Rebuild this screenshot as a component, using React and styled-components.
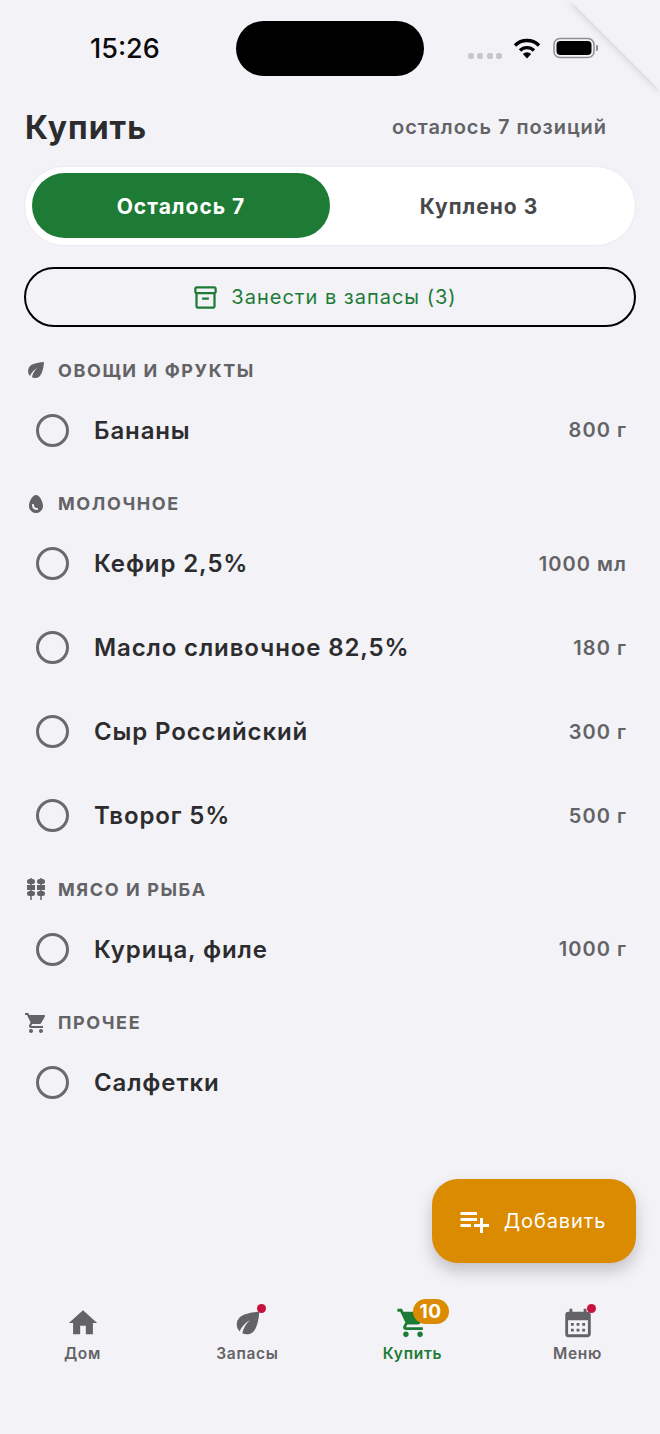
import React from "react";
import styled, { createGlobalStyle } from "styled-components";
import { MdHome, MdEco, MdEgg, MdKebabDining, MdShoppingCart, MdPlaylistAdd, MdOutlineInventory2, MdCalendarMonth } from "react-icons/md";

const Global = createGlobalStyle`
  html, body { margin: 0; padding: 0; background: #f2f2f7; }
  * { box-sizing: border-box; }
`;

const Page = styled.div`
  position: relative;
  width: 660px;
  height: 1434px;
  overflow: hidden;
  display: flex;
  flex-direction: column;
  background: #f2f2f7;
  font-family: Inter, "Noto Sans", sans-serif;
  color: #2c2c2e;
`;

const Fold = styled.svg`
  position: absolute;
  top: 0;
  right: 0;
  width: 100px;
  height: 100px;
`;

const StatusBar = styled.div`
  height: 96px;
  flex: none;
  display: flex;
  align-items: flex-start;
  padding-top: 21px;
`;

const Clock = styled.div`
  width: 236px;
  padding-left: 90px;
  height: 55px;
  line-height: 55px;
  font-size: 27px;
  font-weight: 500;
  color: #0b0b0c;
`;

const Island = styled.div`
  width: 188px;
  height: 55px;
  border-radius: 28px;
  background: #000;
`;

const StatusIcons = styled.div`
  margin-left: 44px;
  height: 55px;
  display: flex;
  align-items: flex-start;
`;

const Dots = styled.div`
  display: flex;
  gap: 3.3px;
  margin-top: 32px;
  margin-right: 11px;
`;

const Dot = styled.span`
  width: 6px;
  height: 6px;
  border-radius: 2px;
  background: #c7c7cc;
`;

const Wifi = styled.svg`
  width: 28px;
  height: 22px;
  margin-top: 16px;
  margin-right: 12px;
`;

const Battery = styled.svg`
  width: 46px;
  height: 22px;
  margin-top: 16px;
`;

const Main = styled.main`
  flex: 1;
  padding: 0 24px;
`;

const Head = styled.header`
  height: 60px;
  display: flex;
  align-items: center;
  justify-content: space-between;
  padding: 2px 29px 0 1px;
`;

const Title = styled.h1`
  margin: 0;
  font-size: 32px;
  font-weight: 700;
  letter-spacing: 1px;
  color: #2c2c2e;
`;

const Remaining = styled.span`
  font-size: 20px;
  font-weight: 600;
  letter-spacing: 0.95px;
  color: #636366;
`;

const Segment = styled.div`
  margin-top: 10px;
  height: 80px;
  display: grid;
  grid-template-columns: 298px 1fr;
  padding: 6px 7px 7px;
  background: #fff;
  border: 1px solid #ebebef;
  border-radius: 40px;
`;

const SegmentItem = styled.div`
  display: flex;
  align-items: center;
  justify-content: center;
  padding-top: 2px;
  border-radius: 33px;
  font-size: 21px;
  font-weight: 700;
  letter-spacing: 1px;
  background: ${(p) => (p.$active ? "#1e7b35" : "transparent")};
  color: ${(p) => (p.$active ? "#fff" : "#48484a")};
`;

const StockButton = styled.div`
  margin-top: 21px;
  height: 60px;
  border: 2px solid #000;
  border-radius: 30px;
  display: flex;
  align-items: center;
  justify-content: center;
  gap: 12px;
  padding-right: 11px;
  color: #1e7b35;
  font-size: 20px;
  font-weight: 400;
  letter-spacing: 1px;
  svg { font-size: 27px; }
`;

const Section = styled.section`
  margin-top: ${(p) => (p.$first ? "32.3px" : "20px")};
`;

const SectionHead = styled.div`
  height: 21.5px;
  display: flex;
  align-items: center;
  gap: 9px;
  color: #636366;
  font-size: 18px;
  font-weight: 700;
  letter-spacing: 1.6px;
  svg { width: 26px; font-size: 24px; flex: none; margin-left: -1px; }
`;

const List = styled.div`
  margin-top: 7.4px;
`;

const Row = styled.div`
  height: 84.6px;
  display: flex;
  align-items: center;
  padding: 0 9px 0 12px;
  & + & { margin-top: -0.6px; }
`;

const Radio = styled.span`
  width: 33px;
  height: 33px;
  flex: none;
  border-radius: 50%;
  border: 3px solid #69696e;
  margin-right: 25px;
`;

const Name = styled.span`
  flex: 1;
  font-size: 24px;
  font-weight: 600;
  letter-spacing: 0.88px;
  color: #2c2c2e;
`;

const Qty = styled.span`
  font-size: 20px;
  font-weight: 600;
  letter-spacing: 1.05px;
  color: #636366;
`;

const Fab = styled.div`
  position: absolute;
  left: 432px;
  top: 1179px;
  width: 204px;
  height: 83.5px;
  border-radius: 26px;
  background: #db8b00;
  color: #fff;
  display: flex;
  align-items: center;
  justify-content: center;
  gap: 12px;
  font-size: 20px;
  letter-spacing: 0.9px;
  box-shadow: 0 8px 16px rgba(0, 0, 0, 0.2);
  svg { font-size: 36px; margin-left: -6px; }
`;

const Nav = styled.nav`
  flex: none;
  height: 150px;
  padding-top: 22px;
  display: grid;
  grid-template-columns: repeat(4, 165px);
`;

const NavItem = styled.div`
  display: flex;
  flex-direction: column;
  align-items: center;
  color: ${(p) => (p.$active ? "#1e7b35" : "#636366")};
  font-size: 15.5px;
  font-weight: 600;
  letter-spacing: 0.7px;
`;

const NavIcon = styled.div`
  position: relative;
  width: 34px;
  height: 34px;
  margin-bottom: 4px;
  display: flex;
  align-items: center;
  justify-content: center;
  svg { font-size: 34px; }
`;

const Pip = styled.span`
  position: absolute;
  top: -2px;
  right: -1px;
  width: 9px;
  height: 9px;
  border-radius: 50%;
  background: #c8103c;
`;

const Badge = styled.span`
  position: absolute;
  top: -7px;
  left: 17px;
  min-width: 36px;
  height: 25px;
  border-radius: 13px;
  background: #db8b00;
  color: #fff;
  font-size: 19px;
  font-weight: 700;
  letter-spacing: 0.5px;
  display: flex;
  align-items: center;
  justify-content: center;
`;

const sections = [
  { icon: <MdEco />, title: "ОВОЩИ И ФРУКТЫ", items: [["Бананы", "800 г"]] },
  { icon: <MdEgg />, title: "МОЛОЧНОЕ", items: [["Кефир 2,5%", "1000 мл"], ["Масло сливочное 82,5%", "180 г"], ["Сыр Российский", "300 г"], ["Творог 5%", "500 г"]] },
  { icon: <MdKebabDining />, title: "МЯСО И РЫБА", items: [["Курица, филе", "1000 г"]] },
  { icon: <MdShoppingCart />, title: "ПРОЧЕЕ", items: [["Салфетки", ""]] },
];

export default function App() {
  return (
    <Page>
      <Global />
      <StatusBar>
        <Clock>15:26</Clock>
        <Island />
        <StatusIcons>
          <Dots><Dot /><Dot /><Dot /><Dot /></Dots>
          <Wifi viewBox="0 0 28 22">
            <path d="M2 8.500A17 17 0 0 1 26 8.500" fill="none" stroke="#000" strokeWidth="3.400" />
            <path d="M7 13.500A10 10 0 0 1 21 13.500" fill="none" stroke="#000" strokeWidth="3.400" />
            <path d="M14 21.500L9.800 17A6 6 0 0 1 18.200 17Z" fill="#000" />
          </Wifi>
          <Battery viewBox="0 0 46 22">
            <rect x="1" y="1.500" width="40" height="19" rx="6" fill="none" stroke="#8e8e93" strokeWidth="1.500" />
            <rect x="3.500" y="4" width="35" height="14" rx="4" fill="#000" />
            <rect x="43" y="8" width="2" height="6" rx="1" fill="#8e8e93" />
          </Battery>
        </StatusIcons>
      </StatusBar>
      <Main>
        <Head>
          <Title>Купить</Title>
          <Remaining>осталось 7 позиций</Remaining>
        </Head>
        <Segment>
          <SegmentItem $active>Осталось 7</SegmentItem>
          <SegmentItem>Куплено 3</SegmentItem>
        </Segment>
        <StockButton><MdOutlineInventory2 />Занести в запасы (3)</StockButton>
        {sections.map((s, i) => (
          <Section key={s.title} $first={i === 0}>
            <SectionHead>{s.icon}{s.title}</SectionHead>
            <List>
              {s.items.map(([n, q]) => (
                <Row key={n}><Radio /><Name>{n}</Name><Qty>{q}</Qty></Row>
              ))}
            </List>
          </Section>
        ))}
      </Main>
      <Fab><MdPlaylistAdd />Добавить</Fab>
      <Nav>
        <NavItem><NavIcon><MdHome /></NavIcon>Дом</NavItem>
        <NavItem><NavIcon><MdEco /><Pip /></NavIcon>Запасы</NavItem>
        <NavItem $active><NavIcon><MdShoppingCart /><Badge>10</Badge></NavIcon>Купить</NavItem>
        <NavItem><NavIcon><MdCalendarMonth /><Pip /></NavIcon>Меню</NavItem>
      </Nav>
      <Fold viewBox="0 0 100 100">
        <defs>
          <filter id="foldShadow" x="-30%" y="-30%" width="160%" height="160%">
            <feDropShadow dx="-1" dy="2" stdDeviation="3" floodColor="#000" floodOpacity="0.12" />
          </filter>
        </defs>
        <polygon points="10,0 100,0 100,90" fill="#f2f2f7" filter="url(#foldShadow)" />
      </Fold>
    </Page>
  );
}
